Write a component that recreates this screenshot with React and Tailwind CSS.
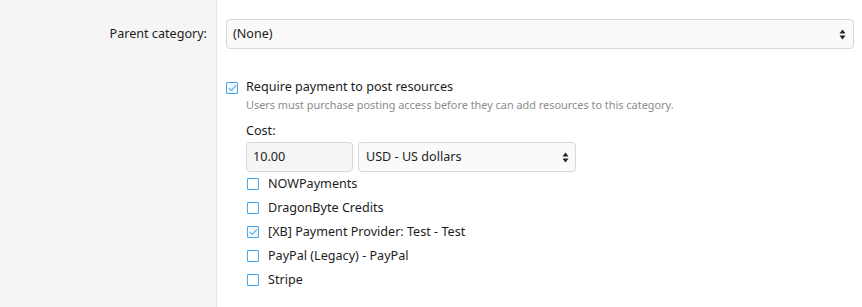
import React from 'react'

const font = { fontFamily: '"Segoe UI", "Noto Sans", sans-serif' }

function Box({ checked }) {
  return (
    <span
      className={
        'flex h-[12px] w-[12px] shrink-0 items-center justify-center rounded-[1px] border border-[#47a7eb] ' +
        (checked ? 'bg-[#f0f7fd]' : 'bg-white')
      }
    >
      {checked ? (
        <svg width="9" height="8" viewBox="0 0 9 8" fill="none">
          <path d="M1 4.2 3.4 6.5 8 1.3" stroke="#5fb2ee" strokeWidth="1.2" />
        </svg>
      ) : null}
    </span>
  )
}

function Arrows() {
  return (
    <svg width="7" height="11" viewBox="0 0 7 11" className="shrink-0">
      <path d="M3.5 0.5 6.5 4.5H0.5Z" fill="#222" />
      <path d="M3.5 10.5 6.5 6.5H0.5Z" fill="#222" />
    </svg>
  )
}

const providers = [
  ['NOWPayments', false],
  ['DragonByte Credits', false],
  ['[XB] Payment Provider: Test - Test', true],
  ['PayPal (Legacy) - PayPal', false],
  ['Stripe', false],
]

export default function App() {
  return (
    <div className="flex h-[307px] w-[862px] bg-white text-[12.6px] text-[#1d1d1d]" style={font}>
      <div className="w-[217px] shrink-0 border-r border-[#e8e8e8] bg-[#f5f5f5] pt-[19px] pr-[9px]">
        <div className="flex h-[30px] items-center justify-end">Parent category:</div>
      </div>

      <div className="flex-1 pt-[19px] pl-[9px] pr-[8px]">
        <div className="flex h-[30px] items-center justify-between rounded-[4px] border border-[#d8d8d8] bg-[#fafafa] pl-[6px] pr-[7px]">
          <span>(None)</span>
          <Arrows />
        </div>

        <div className="mt-[30px] flex h-[17px] items-center gap-[8px]">
          <Box checked />
          <span>Require payment to post resources</span>
        </div>
        <div className="pl-[20px] text-[10.9px] leading-[17px] text-[#8c8c8c]">
          Users must purchase posting access before they can add resources to this category.
        </div>

        <div className="pl-[20px]">
          <div className="mt-[9px] h-[17px] leading-[17px]">Cost:</div>
          <div className="mt-[3px] flex gap-[5px]">
            <div className="flex h-[30px] w-[107px] items-center rounded-[4px] border border-[#d8d8d8] bg-[#f5f5f5] px-[6px]">
              10.00
            </div>
            <div className="flex h-[30px] w-[218px] items-center justify-between rounded-[4px] border border-[#d8d8d8] bg-[#fafafa] pl-[7px] pr-[6px]">
              <span>USD - US dollars</span>
              <Arrows />
            </div>
          </div>

          <div>
            {providers.map(([name, on]) => (
              <div key={name} className="flex h-[24px] items-center gap-[9px] pl-[1px]">
                <Box checked={on} />
                <span>{name}</span>
              </div>
            ))}
          </div>
        </div>
      </div>
    </div>
  )
}
